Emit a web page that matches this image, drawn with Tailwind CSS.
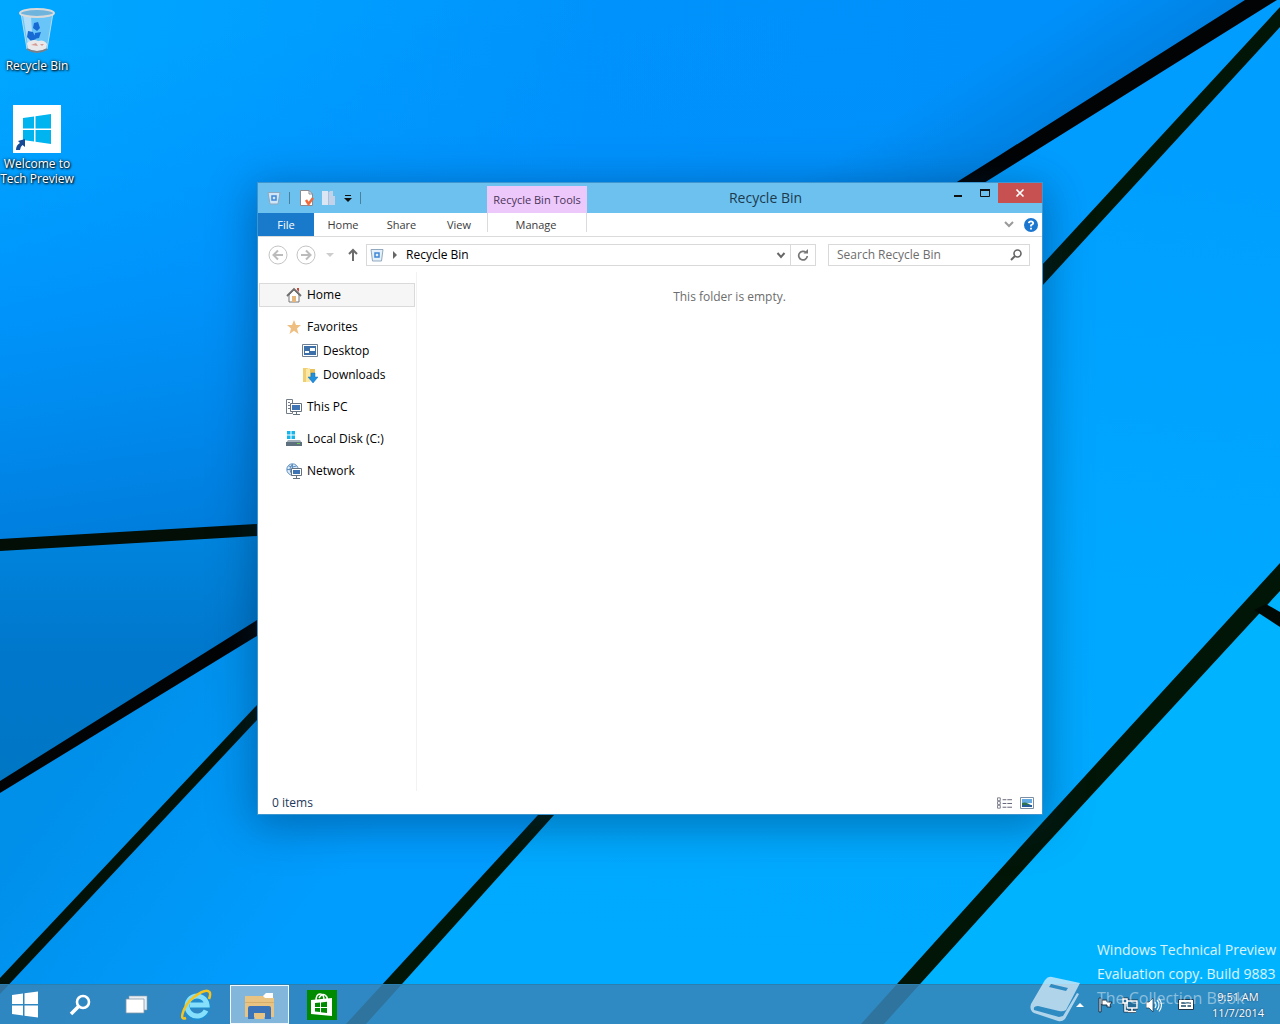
<!DOCTYPE html>
<html lang="en">
<head>
  <meta charset="UTF-8" />
  <meta name="viewport" content="width=device-width, initial-scale=1.0"/>
  <title>Recycle Bin</title>
  <script src="https://cdn.jsdelivr.net/npm/@tailwindcss/browser@4"></script>
</head>
<body class="bg-[#009dff] font-['Open_Sans','Noto_Sans',sans-serif] text-xs text-black">

<div class="relative flex h-screen flex-col overflow-hidden">

  <!-- Wallpaper -->
  <svg class="absolute inset-0 h-full w-full" viewBox="0 0 1280 1024" preserveAspectRatio="none" aria-hidden="true">
    <defs>
      <linearGradient id="sky" gradientUnits="userSpaceOnUse" x1="0" y1="0" x2="1000" y2="120">
        <stop offset="0" stop-color="#00a8ff"/>
        <stop offset=".25" stop-color="#00a0ff"/>
        <stop offset=".6" stop-color="#0092fc"/>
        <stop offset="1" stop-color="#0090fa"/>
      </linearGradient>
      <linearGradient id="skyDown" gradientUnits="userSpaceOnUse" x1="0" y1="60" x2="60" y2="540">
        <stop offset="0" stop-color="#0090ff" stop-opacity="0"/>
        <stop offset=".5" stop-color="#0090fa" stop-opacity=".8"/>
        <stop offset="1" stop-color="#007edd" stop-opacity="1"/>
      </linearGradient>
      <linearGradient id="wedge" x1="0" y1="0" x2="0" y2="1">
        <stop offset="0" stop-color="#0086e0"/>
        <stop offset=".5" stop-color="#0077cb"/>
        <stop offset="1" stop-color="#0077c4"/>
      </linearGradient>
      <linearGradient id="low" gradientUnits="userSpaceOnUse" x1="60" y1="760" x2="300" y2="940">
        <stop offset="0" stop-color="#008fe9"/>
        <stop offset="1" stop-color="#009dff"/>
      </linearGradient>
      <linearGradient id="right" gradientUnits="userSpaceOnUse" x1="1000" y1="150" x2="900" y2="1000">
        <stop offset="0" stop-color="#009fff"/>
        <stop offset=".5" stop-color="#00a8ff"/>
        <stop offset="1" stop-color="#00aaff"/>
      </linearGradient>
      <linearGradient id="edge" gradientUnits="userSpaceOnUse" x1="1060" y1="10" x2="1125" y2="110">
        <stop offset="0" stop-color="#0077d0" stop-opacity="0"/>
        <stop offset="1" stop-color="#0077d0" stop-opacity=".7"/>
      </linearGradient>
    </defs>
    <path fill="url(#sky)" d="M0 0H1280V1024H0z"/>
    <path fill="url(#skyDown)" d="M0 0H1260L400 535L0 545z"/>
    <path fill="url(#edge)" d="M700 0H1260L700 350z"/>
    <path fill="url(#wedge)" d="M0 545L400 522V540L0 787z"/>
    <path fill="url(#low)" d="M0 787L1260 0L1280 0V10L345 1024H0z"/>
    <path fill="url(#right)" d="M1280 17V1024H355z"/>
    <path fill="#00b3ff" d="M1280 577V1024H874z"/>
    <path fill="#020e06" d="M0 539L257 524L400 516V528L257 536L0 551z"/>
    <path fill="#010304" d="M0 781L257 620L1000 155L1245 0H1277L1000 173L257 636L0 793z"/>
    <path fill="#021208" d="M0 978L257 705L300 660V676L257 720L0 994z"/>
    <path fill="#021608" d="M1280 7V27L1042 286L554 815L366 1024H346L538 815L1042 265z"/>
    <path fill="#021608" d="M1280 563V591L1042 849L884 1024H861L1042 823z"/>
    <path fill="#010904" d="M1254 610L1266 604L1280 612V627z"/>
  </svg>

  <!-- Desktop icons -->
  <main class="relative flex-1">
    <div class="flex w-[74px] flex-col gap-[31px] pt-2 text-center text-white [text-shadow:1px_1px_2px_#000,0_0_3px_#000]">
      <a href="#" class="flex flex-col items-center gap-1">
        <svg class="h-[46px] w-12" viewBox="0 0 48 46">
          <path fill="#8ccdf5" fill-opacity=".75" stroke="#b6dcf3" d="M8 5L14 41Q24 47 34 41L40 5z"/>
          <path fill="#dff0fa" fill-opacity=".6" d="M10 7L15 38L20 40L18 8z"/>
          <path fill="#1769d4" d="M21 15l4-1 2 6-3 3-4-3zM15 23l5 1 3 7-5 2-4-4zM22 25l6-1-2 6-5 1z"/>
          <path fill="#e9e9ec" d="M14 35Q20 30 25 33Q31 31 34 36L33 41Q24 45 15 41z"/>
          <path fill="#d79b96" d="M18 37l5-2 2 3zM27 36l4 0-2 2z"/>
          <ellipse cx="24" cy="5" rx="17" ry="4" fill="#6fb4dd" stroke="#dadada" stroke-width="2"/>
          <path fill="none" stroke="#777f88" stroke-width="2" d="M14 41Q24 47 34 41"/>
        </svg>
        <span class="leading-4">Recycle Bin</span>
      </a>
      <a href="#" class="flex flex-col items-center gap-[3px]">
        <svg class="size-12" viewBox="0 0 48 48">
          <path fill="#fff" d="M0 0H48V48H0z"/>
          <path fill="#00b4f0" d="M10 13L21 11.500V23.500H10zM22.500 11.200L38 9V23.500H22.500zM10 25H21V36.500L10 35zM22.500 25H38V39L22.500 36.800z"/>
          <path fill="#164a94" d="M5 36L12 34V42L9.500 40Q7 42 7 45H3Q3 40 7 38z"/>
        </svg>
        <span class="leading-[15px]">Welcome to<br>Tech&nbsp;Preview</span>
      </a>
    </div>
  </main>

  <!-- Explorer window -->
  <section class="absolute top-[182px] right-[237px] bottom-[209px] left-[257px] flex flex-col border border-[#3d96cf] bg-white shadow-[0_8px_40px_4px_rgba(0,40,80,0.4)]">
    <header class="flex h-[30px] bg-[#6cc1ee]">
      <div class="flex w-[229px] items-center pl-[9px]">
        <svg class="size-3.5" viewBox="0 0 14 14"><path fill="#cfe6f8" stroke="#8fa9bf" d="M1 1.500H13L11 13H3z"/><path fill="none" stroke="#3f86d6" stroke-width="1.500" d="M5 5h4v4H5z"/></svg>
        <i class="ml-2 h-3 w-px bg-[#4a7f9f]"></i>
        <button class="ml-2.5" aria-label="Properties"><svg class="h-4 w-3.5" viewBox="0 0 14 16"><path fill="#fff" stroke="#8b8b95" d="M.5 .5H9L12.500 4V15.500H.5z"/><path fill="none" stroke="#8b8b95" d="M9 .5V4h3.500"/><path fill="none" stroke="#f0693a" stroke-width="2.500" d="M6 10l2.500 4L13 8"/></svg></button>
        <button class="ml-2" aria-label="New folder"><svg class="h-4 w-3.5" viewBox="0 0 14 16"><path fill="#dbe6f5" d="M0 1H6V15H0z"/><path fill="#c2d2e8" d="M6 3l2-2h3v5h2v9H6z"/><path fill="#a9bfdd" d="M6 3h1v12H6z"/></svg></button>
        <button class="ml-2" aria-label="Customize Quick Access Toolbar"><svg class="h-2 w-2" viewBox="0 0 8 8"><path fill="#111" d="M1 1h6v1H1zM0 4h8L4 8z"/></svg></button>
        <i class="ml-2 h-3 w-px bg-[#4a7f9f]"></i>
      </div>
      <div class="mt-[3px] w-[100px] bg-[#ecc8fb] text-center text-[11px] leading-[27px] whitespace-nowrap text-[#4a3358]">Recycle Bin Tools</div>
      <h1 class="flex-1 text-center text-sm leading-[30px] text-[#1c3a4e]">Recycle Bin</h1>
      <div class="flex h-5">
        <button class="grid w-[27px] place-items-center" aria-label="Minimize"><svg class="h-3 w-2.5" viewBox="0 0 10 12"><path fill="#111" d="M1 8h8v2H1z"/></svg></button>
        <button class="grid w-[27px] place-items-center" aria-label="Maximize"><svg class="h-3 w-2.5" viewBox="0 0 10 12"><path fill="none" stroke="#111" d="M.5 3.500h9v6h-9z"/><path fill="#111" d="M0 2h10v2H0z"/></svg></button>
        <button class="grid w-11 place-items-center bg-[#c75050]" aria-label="Close"><svg class="size-2.5" viewBox="0 0 10 10"><path fill="none" stroke="#fff" stroke-width="1.600" d="M1.500 1.500l7 7M8.500 1.500l-7 7"/></svg></button>
      </div>
    </header>

    <nav class="flex h-6 border-b border-[#dadbdc] text-[11px] leading-[23px] text-[#3b3b3b]">
      <button class="w-14 bg-[#1979ca] text-white">File</button>
      <button class="w-[58px]">Home</button>
      <button class="w-[59px]">Share</button>
      <button class="w-14">View</button>
      <button class="mb-1 w-[100px] border-x border-[#dadbdc] pr-0.5">Manage</button>
      <div class="flex flex-1 items-center justify-end gap-2.5 pr-1">
        <button aria-label="Expand the Ribbon"><svg class="h-2 w-2.5" viewBox="0 0 10 8"><path fill="none" stroke="#9a9a9a" stroke-width="2" d="M1 1l4 4 4-4"/></svg></button>
        <button aria-label="Help"><svg class="size-3.5" viewBox="0 0 14 14"><circle cx="7" cy="7" r="7" fill="#1b76d0"/><path fill="none" stroke="#fff" stroke-width="1.800" d="M4.800 5.200Q5 3.300 7 3.300T9.200 5.200Q9.200 6.300 7 7.300V8.500M7 9.700v1.800"/></svg></button>
      </div>
    </nav>

    <div class="flex items-center pt-[7px] pr-3 pl-2.5">
      <button aria-label="Back"><svg class="size-5" viewBox="0 0 20 20"><circle cx="10" cy="10" r="9" fill="none" stroke="#c4c4c4"/><path fill="none" stroke="#bcbcbc" stroke-width="2" d="M15 10H6M10 5.500L5.500 10l4.500 4.500"/></svg></button>
      <button class="ml-2" aria-label="Forward"><svg class="size-5" viewBox="0 0 20 20"><circle cx="10" cy="10" r="9" fill="none" stroke="#c4c4c4"/><path fill="none" stroke="#bcbcbc" stroke-width="2" d="M5 10h9M10 5.500l4.500 4.500-4.500 4.500"/></svg></button>
      <button class="ml-2.5" aria-label="Recent locations"><svg class="h-2 w-2" viewBox="0 0 8 8"><path fill="#cdcdcd" d="M0 2h8L4 6z"/></svg></button>
      <button class="ml-3.5" aria-label="Up"><svg class="h-3.5 w-2.5" viewBox="0 0 10 14"><path fill="none" stroke="#6b6b6b" stroke-width="2" d="M5 13V2M1 6l4-4 4 4"/></svg></button>
      <div class="ml-2 flex h-[22px] flex-1 items-center border border-[#d9d9d9]">
        <svg class="ml-[3px] size-3.5" viewBox="0 0 14 14"><path fill="#e4f0fa" stroke="#91a9bd" d="M1 1.500H13L11.500 13H2.500z"/><path fill="none" stroke="#3f86d6" stroke-width="1.500" d="M5 5h4v4H5z"/></svg>
        <svg class="ml-2 h-2 w-1.5" viewBox="0 0 6 8"><path fill="#666" d="M1 0l4 4-4 4z"/></svg>
        <span class="ml-2 flex-1 leading-5">Recycle Bin</span>
        <button class="px-1" aria-label="Previous locations"><svg class="h-2 w-2.5" viewBox="0 0 10 8"><path fill="none" stroke="#666" stroke-width="2" d="M1.500 2L5 6l3.500-4"/></svg></button>
        <button class="grid h-5 w-[25px] place-items-center border-l border-[#d9d9d9]" aria-label="Refresh"><svg class="size-3" viewBox="0 0 12 12"><path fill="none" stroke="#777" stroke-width="1.700" d="M9 3.500A4.300 4.300 0 1 0 10.300 7"/><path fill="#777" d="M6.500 4.500h4.500V0z"/></svg></button>
      </div>
      <label class="ml-3 flex h-[22px] w-[202px] items-center border border-[#d9d9d9] pr-1.5 pl-2">
        <input type="text" placeholder="Search Recycle Bin" aria-label="Search Recycle Bin" class="min-w-0 flex-1 outline-none placeholder:text-[#6d6d6d]">
        <svg class="size-3.5" viewBox="0 0 14 14"><circle cx="8.500" cy="5.500" r="3.500" fill="none" stroke="#666" stroke-width="1.600"/><path stroke="#666" stroke-width="2" d="M6 8l-4 4"/></svg>
      </label>
    </div>

    <div class="flex flex-1 pt-1.5">
      <!-- Navigation pane -->
      <aside class="flex w-[159px] flex-col gap-2 border-r border-[#f2f2f2] pt-[11px] pr-px pl-px leading-[22px]">
        <a href="#" class="flex h-6 items-center gap-[5px] border border-[#dadada] bg-[#f6f6f6] pl-[26px]">
          <svg class="size-4" viewBox="0 0 16 16"><path fill="#fff" stroke="#777" d="M3 8V15H13V8L8 3z"/><path fill="#c94b3c" d="M11 1h2v4l-2-2z"/><path fill="none" stroke="#6f6f6f" stroke-width="1.800" d="M1 9l7-7 7 7"/><path fill="#e4b57c" d="M6 9h4v6H6z"/></svg>
          Home
        </a>
        <div>
          <a href="#" class="flex h-6 items-center gap-[5px] pl-[27px]">
            <svg class="size-4" viewBox="0 0 16 16"><path fill="#eebf80" d="M8 1l2 5h5l-4 3.500L12.500 15 8 11.800 3.500 15 5 9.500 1 6h5z"/></svg>
            Favorites
          </a>
          <a href="#" class="flex h-6 items-center gap-[5px] pl-[43px]">
            <svg class="size-4" viewBox="0 0 16 16"><path fill="#fff" stroke="#6d7f92" d="M.5 1.500h15v12H.5z"/><path fill="#3d6fa8" d="M2 3h12v9H2z"/><path fill="#fff" d="M3 8h4v2H3zM8 5h5v3H8z"/></svg>
            Desktop
          </a>
          <a href="#" class="flex h-6 items-center gap-[5px] pl-[43px]">
            <svg class="size-4" viewBox="0 0 16 16"><path fill="#f0cf72" d="M1 1h5v14H1z"/><path fill="#fbe7a6" d="M4 2l4-1v14H4z"/><path fill="#e9c25c" d="M8 2h5v11H8z"/><path fill="#1e90dd" stroke="#1670b8" stroke-width=".5" d="M9 6h4v4h3l-5 6-5-6h3z"/></svg>
            Downloads
          </a>
        </div>
        <a href="#" class="flex h-6 items-center gap-[5px] pl-[27px]">
          <svg class="size-4" viewBox="0 0 16 16"><path fill="#fff" stroke="#737d88" d="M.5 .5h6v14h-6z"/><path stroke="#737d88" d="M2 3.500h2M2 6.500h2M2 9.500h2"/><path fill="#fff" stroke="#65717e" d="M4.500 4.500h11v8h-11z"/><path fill="#3f74b4" d="M6 6h8v5H6z"/><path stroke="#65717e" d="M10.500 13v2M7 15.500h7"/></svg>
          This PC
        </a>
        <a href="#" class="flex h-6 items-center gap-[5px] pl-[27px]">
          <svg class="size-4" viewBox="0 0 16 16"><path fill="#14b5ea" d="M1 0h3.500v3.500H1zM5.500 0H9v3.500H5.500zM1 4.500h3.500V8H1zM5.500 4.500H9V8H5.500z"/><path fill="#a3afb9" d="M2 9h12l2 3H0z"/><path fill="#5e6f7d" d="M0 11h16v4H0z"/><path fill="#5fd14a" d="M11 12h3v1h-3z"/></svg>
          Local Disk (C:)
        </a>
        <a href="#" class="flex h-6 items-center gap-[5px] pl-[27px]">
          <svg class="size-4" viewBox="0 0 16 16"><circle cx="6.500" cy="6.500" r="5.700" fill="#dcebf8" stroke="#5f8fc0"/><path fill="none" stroke="#5f8fc0" d="M1 6.500h11M6.500 1v11M2.500 3q4 2 8 0M6.500 1q-5 5 0 11"/><path fill="#fff" stroke="#65717e" d="M5.500 5.500h10v7h-10z"/><path fill="#3f74b4" d="M7 7h7v4H7z"/><path stroke="#65717e" d="M10.500 13v2M7 15.500h7"/></svg>
          Network
        </a>
      </aside>
      <p class="flex-1 pt-4 text-center leading-[18px] text-[#6d6d6d]">This folder is empty.</p>
    </div>

    <footer class="flex h-[23px] items-center gap-2 pr-2 pl-3.5 text-[#1e395b]">
      <span class="flex-1">0 items</span>
      <button aria-label="Details view"><svg class="h-3 w-[15px]" viewBox="0 0 16 12"><path fill="#fff" stroke="#7b7b8b" d="M.5 .5h3v3h-3zM.5 4.500h3v3h-3zM.5 8.500h3v3h-3z"/><path stroke="#5b5b70" d="M6 2.500h4M11 2.500h5M6 6.500h4M11 6.500h5M6 10.500h4M11 10.500h5"/></svg></button>
      <button aria-label="Large icons view"><svg class="h-3 w-3.5" viewBox="0 0 14 12"><path fill="#fff" stroke="#7c8ea3" d="M.5 .5h13v11H.5z"/><path fill="#62aadf" d="M2 2h10v4H2z"/><path fill="#2e7250" d="M2 6q4-2 10 3v1H2z"/><path fill="#275c9a" d="M2 8h10v2H2z"/></svg></button>
    </footer>
  </section>

  <!-- Taskbar -->
  <footer class="relative flex h-10 items-stretch border-t border-[#2a7fae] bg-[#3785b8]/85 text-white">
    <button class="grid w-[50px] place-items-center" aria-label="Start"><svg class="size-7" viewBox="0 0 28 28"><path fill="#fff" d="M1 4l11-1.500V13H1zM13.500 2.300L27 .5V13H13.500zM1 14.500h11v10L1 23zM13.500 14.500H27v12L13.500 24.700z"/></svg></button>
    <button class="ml-0.5 grid w-14 place-items-center" aria-label="Search"><svg class="size-6" viewBox="0 0 24 24"><circle cx="15" cy="9" r="6" fill="none" stroke="#fff" stroke-width="2.600"/><path stroke="#fff" stroke-width="3.500" d="M10.500 13.500L3 21"/></svg></button>
    <button class="grid w-14 place-items-center" aria-label="Task View"><svg class="h-5 w-6" viewBox="0 0 24 20"><path fill="#e8eef4" stroke="#8c9fb0" stroke-width=".6" d="M5 1h18v14H5z"/><path fill="#fff" stroke="#8397a8" stroke-width=".8" d="M2 4h18v14H2z"/></svg></button>
    <button class="ml-0.5 grid w-[59px] place-items-center" aria-label="Internet Explorer"><svg class="size-8" viewBox="0 0 32 32"><path fill="none" stroke="#1d8fd2" stroke-width="7" d="M26.500 21.500A10 10 0 1 1 27 16H10"/><path fill="none" stroke="#86e0fb" stroke-width="5" d="M26 21.500A10 10 0 1 1 27 16H10"/><path fill="none" stroke="#f4c521" stroke-width="2.500" d="M6 29Q1 31 2.500 25Q5 15 14 8Q26-1 29.500 3Q31 5 29 10"/></svg></button>
    <button class="mr-[3px] ml-[5px] grid w-[59px] place-items-center border border-white/90 bg-white/40" aria-label="File Explorer"><svg class="h-7 w-8" viewBox="0 0 32 28"><path fill="#fff" d="M19 5l3-3h7v5H19z"/><path fill="#e9c382" d="M1 5h18l2 2h9v19H1z"/><path fill="#d6ae6c" d="M1 11h29v1H1z"/><path fill="#3b73b8" d="M4 17q0-2 2-2h19q2 0 2 2v11h-6v-6H10v6H4z"/><path fill="#e9c382" d="M11 22h9v6h-9z"/></svg></button>
    <button class="grid w-[59px] place-items-center" aria-label="Store"><svg class="size-[30px]" viewBox="0 0 30 30"><path fill="#008a00" d="M0 0H30V30H0z"/><path fill="none" stroke="#fff" stroke-width="1.500" d="M9 11Q9 4 13 4T17 10M12 8Q15 3 18 5T20 10"/><path fill="#fff" d="M4 10L25 8V26L4 24z"/><path fill="#008a00" d="M8 13l5-.5V17H8zM14 12.400l6-.6V17h-6zM8 18h5v4l-5-.5zM14 18h6v5l-6-.7z"/></svg></button>

    <div class="ml-auto flex items-center pr-4">
      <button aria-label="Show hidden icons"><svg class="h-1.5 w-2" viewBox="0 0 8 6"><path fill="#fff" d="M0 5h8L4 1z"/></svg></button>
      <svg class="ml-3.5 size-4" viewBox="0 0 16 16"><path fill="#fff" stroke="#1a3348" d="M1 1h2v14H1zM4 3h5v2h5l-2 3 1 2H9V8H4z"/></svg>
      <svg class="ml-2 size-4" viewBox="0 0 16 16"><path fill="none" stroke="#1a3348" stroke-width="3" d="M5 4h10v7H5zM10 11v4M6 14.500h8M1 2h4v4H1zM3 6v8h3"/><path fill="#246b98" stroke="#fff" stroke-width="1.500" d="M5 4h10v7H5zM10 11v4M6 14.500h8"/><path fill="#246b98" stroke="#fff" stroke-width="1.500" d="M1 2h4v4H1zM3 6v8h3"/></svg>
      <svg class="ml-2 size-4" viewBox="0 0 16 16"><path fill="#fff" stroke="#1a3348" stroke-width=".7" d="M0 5h3l4-4v14l-4-4H0z"/><path fill="none" stroke="#fff" stroke-width="1.100" d="M9 5q2 3 0 6M11 3q4 5 0 10M13 1.500q5 6.500 0 13"/></svg>
      <svg class="ml-4 size-4" viewBox="0 0 16 16"><path fill="#fff" stroke="#1a3348" d="M.5 2.500h15v10H.5z"/><path stroke="#1d4a68" stroke-width="1.500" d="M3 6h10M3 9h5M9.500 9H13"/></svg>
      <p class="ml-[18px] text-center text-[11px] leading-4 [text-shadow:0_0_2px_#135]">9:51 AM<br>11/7/2014</p>
    </div>
  </footer>

  <!-- Build watermark, lies over the taskbar -->
  <div class="pointer-events-none absolute right-1 bottom-3.5 flex items-start gap-3 text-sm leading-6 text-white/85">
    <div>
      <p>Windows Technical Preview</p>
      <p>Evaluation copy. Build 9883</p>
      <p class="text-base leading-6 text-white/45">The Collection Book</p>
    </div>
  </div>
  <svg class="absolute right-[199px] bottom-0.5 h-[46px] w-[51px]" viewBox="0 0 51 46" aria-hidden="true">
    <path fill="#dceef8" fill-opacity=".75" fill-rule="evenodd" d="M22 1L50 7L36 34Q33 36 29 35L8 30Q3 30 4 34L29 41L33 40L47 17L49 18L35 43Q32 46 28 45L4 37Q-1 34 1 28L15 4Q18 0 22 1zM21 8L19 11L36 15L38 12z"/>
  </svg>
</div>

</body>
</html>
